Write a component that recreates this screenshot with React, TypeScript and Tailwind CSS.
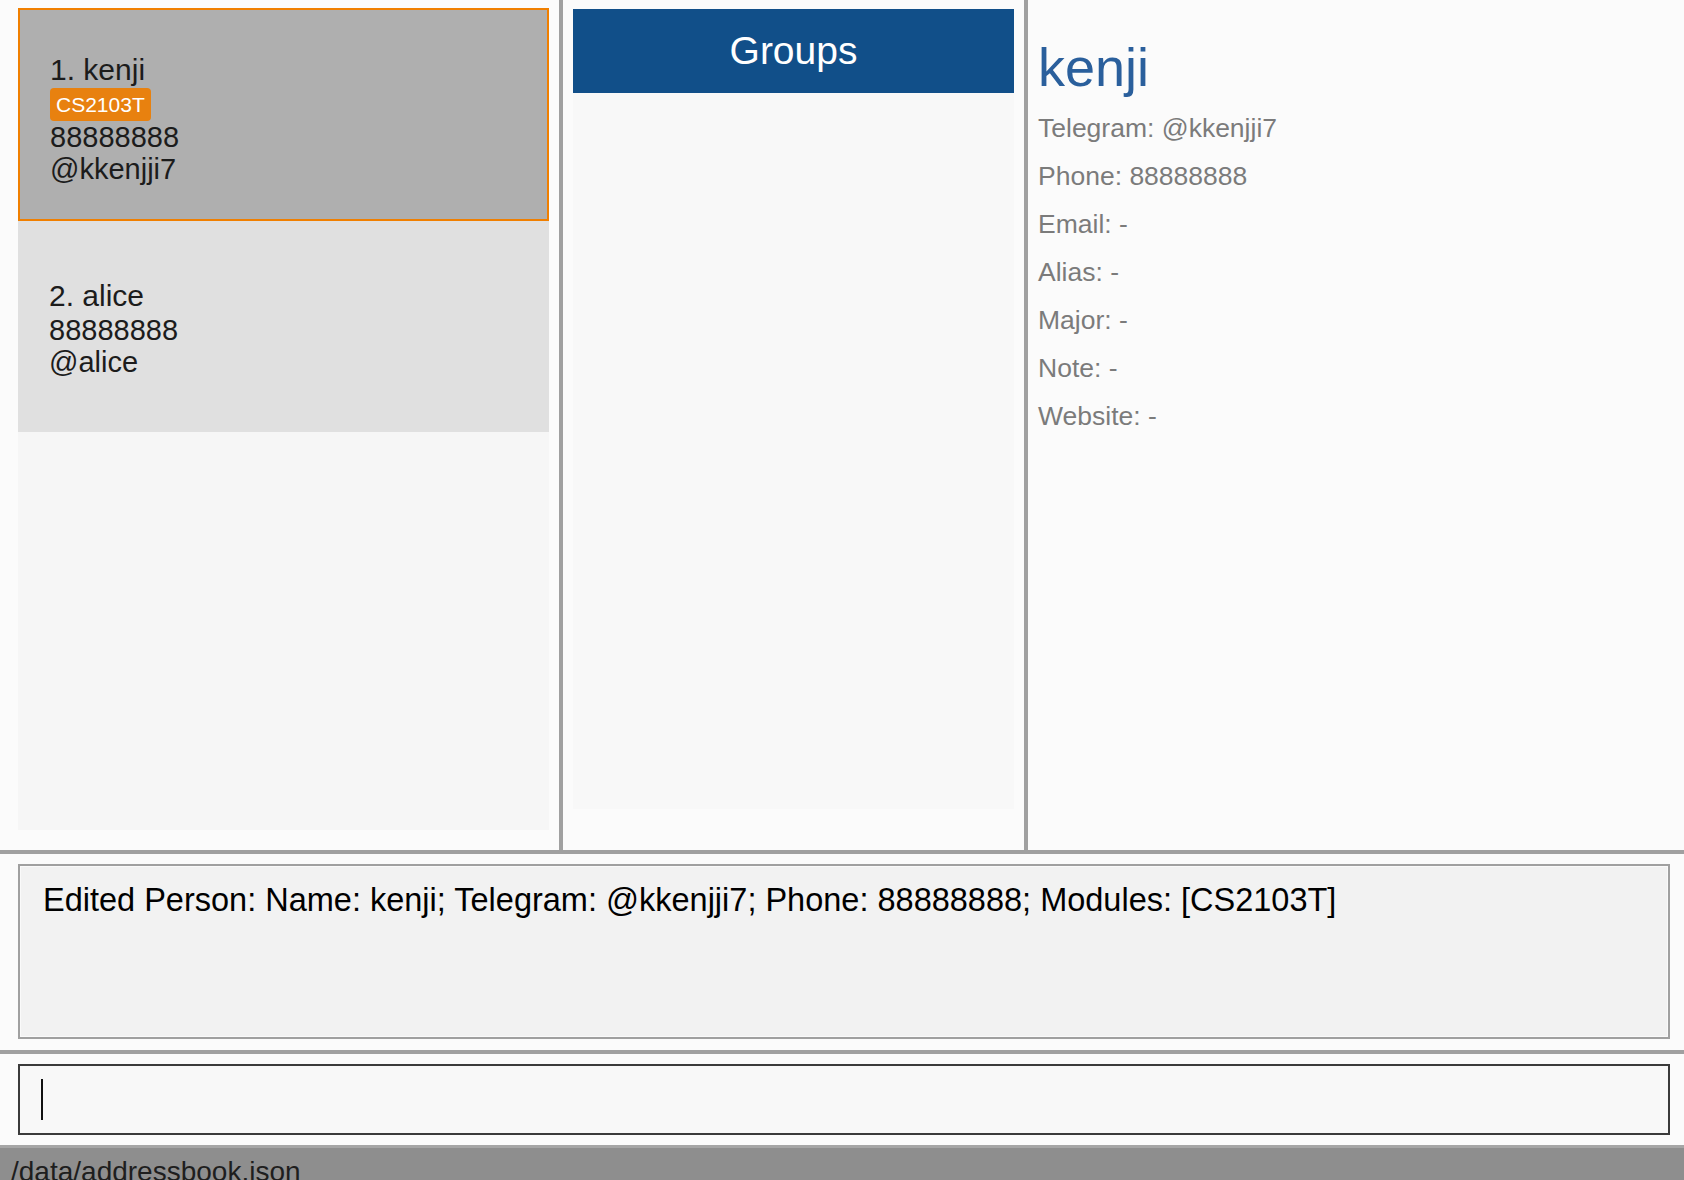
import React from "react";

type Person = {
  index: number;
  name: string;
  phone: string;
  telegram: string;
  modules: string[];
};

const people: Person[] = [
  { index: 1, name: "kenji", phone: "88888888", telegram: "@kkenjji7", modules: ["CS2103T"] },
  { index: 2, name: "alice", phone: "88888888", telegram: "@alice", modules: [] },
];

const details = [
  ["Telegram", "@kkenjji7"],
  ["Phone", "88888888"],
  ["Email", "-"],
  ["Alias", "-"],
  ["Major", "-"],
  ["Note", "-"],
  ["Website", "-"],
];

function PersonCard({ person, selected }: { person: Person; selected: boolean }) {
  return (
    <div
      className={
        selected
          ? "h-[213px] border-2 border-[#f07f00] bg-[#afafaf] pl-[30px] pt-[42px] text-[#1c1c1c]"
          : "h-[211px] bg-[#e0e0e0] pl-[31px] pt-[57px] text-[#1c1c1c]"
      }
    >
      <div className="text-[30px] leading-[36px]">
        {person.index}. {person.name}
      </div>
      {person.modules.length > 0 && (
        <div className="flex gap-2">
          {person.modules.map((m) => (
            <span
              key={m}
              className="h-[33px] rounded-[4px] bg-[#e8810f] px-[6px] text-[21px] leading-[33px] text-white"
            >
              {m}
            </span>
          ))}
        </div>
      )}
      <div className="text-[29px] leading-[32px]">{person.phone}</div>
      <div className="text-[29px] leading-[32px]">{person.telegram}</div>
    </div>
  );
}

export default function App() {
  const selected = people[0];

  return (
    <div className="flex h-[1180px] w-[1684px] flex-col overflow-hidden bg-[#fbfbfb] font-['Liberation_Sans',Arial,sans-serif]">
      {/* top: list | groups | details */}
      <div className="flex h-[850px] shrink-0">
        <div className="w-[559px] shrink-0 pb-[20px] pl-[18px] pr-[10px] pt-[8px]">
          <div className="flex h-full flex-col bg-[#f6f6f6]">
            {people.map((p) => (
              <PersonCard key={p.index} person={p} selected={p.index === 1} />
            ))}
          </div>
        </div>

        <div className="w-[4px] shrink-0 bg-[#a0a0a0]" />

        <div className="w-[461px] shrink-0 pb-[41px] pl-[10px] pr-[10px] pt-[9px]">
          <div className="flex h-full flex-col bg-[#f8f8f8]">
            <div className="h-[84px] bg-[#114f89] text-center text-[39px] leading-[84px] text-white">
              Groups
            </div>
          </div>
        </div>

        <div className="w-[4px] shrink-0 bg-[#a0a0a0]" />

        <div className="flex-1 pl-[10px] pt-[37px]">
          <div className="text-[54px] leading-[60px] text-[#2a5f9c]">{selected.name}</div>
          <div className="mt-[7px] flex flex-col">
            {details.map(([k, v]) => (
              <div key={k} className="text-[26.5px] leading-[48px] text-[#7b7b7b]">
                {k}: {v}
              </div>
            ))}
          </div>
        </div>
      </div>

      <div className="h-[4px] shrink-0 bg-[#a0a0a0]" />

      {/* result display */}
      <div className="h-[196px] shrink-0 pb-[11px] pl-[18px] pr-[14px] pt-[10px]">
        <div className="h-full border-2 border-[#a0a0a0] bg-[#f2f2f2] pl-[23px] pt-[14px] shadow-[inset_0_0_0_1px_#fafafa]">
          <div className="text-[32.5px] leading-[40px] text-black">
            Edited Person: Name: kenji; Telegram: @kkenjji7; Phone: 88888888; Modules: [CS2103T]
          </div>
        </div>
      </div>

      <div className="h-[4px] shrink-0 bg-[#a0a0a0]" />

      {/* command box */}
      <div className="h-[91px] shrink-0 pl-[18px] pr-[14px] pt-[10px]">
        <div className="flex h-[71px] items-center border-2 border-[#3b3b3b] bg-[#f8f8f8] pl-[21px]">
          <div className="h-[41px] w-[2px] bg-[#111]" />
        </div>
      </div>

      {/* status bar */}
      <div className="flex-1 border-t-[3px] border-[#a6a6a6] bg-[#8e8e8e] pl-[11px] pt-[10px]">
        <div className="text-[28px] leading-[28px] text-[#1e1e1e]">/data/addressbook.json</div>
      </div>
    </div>
  );
}
